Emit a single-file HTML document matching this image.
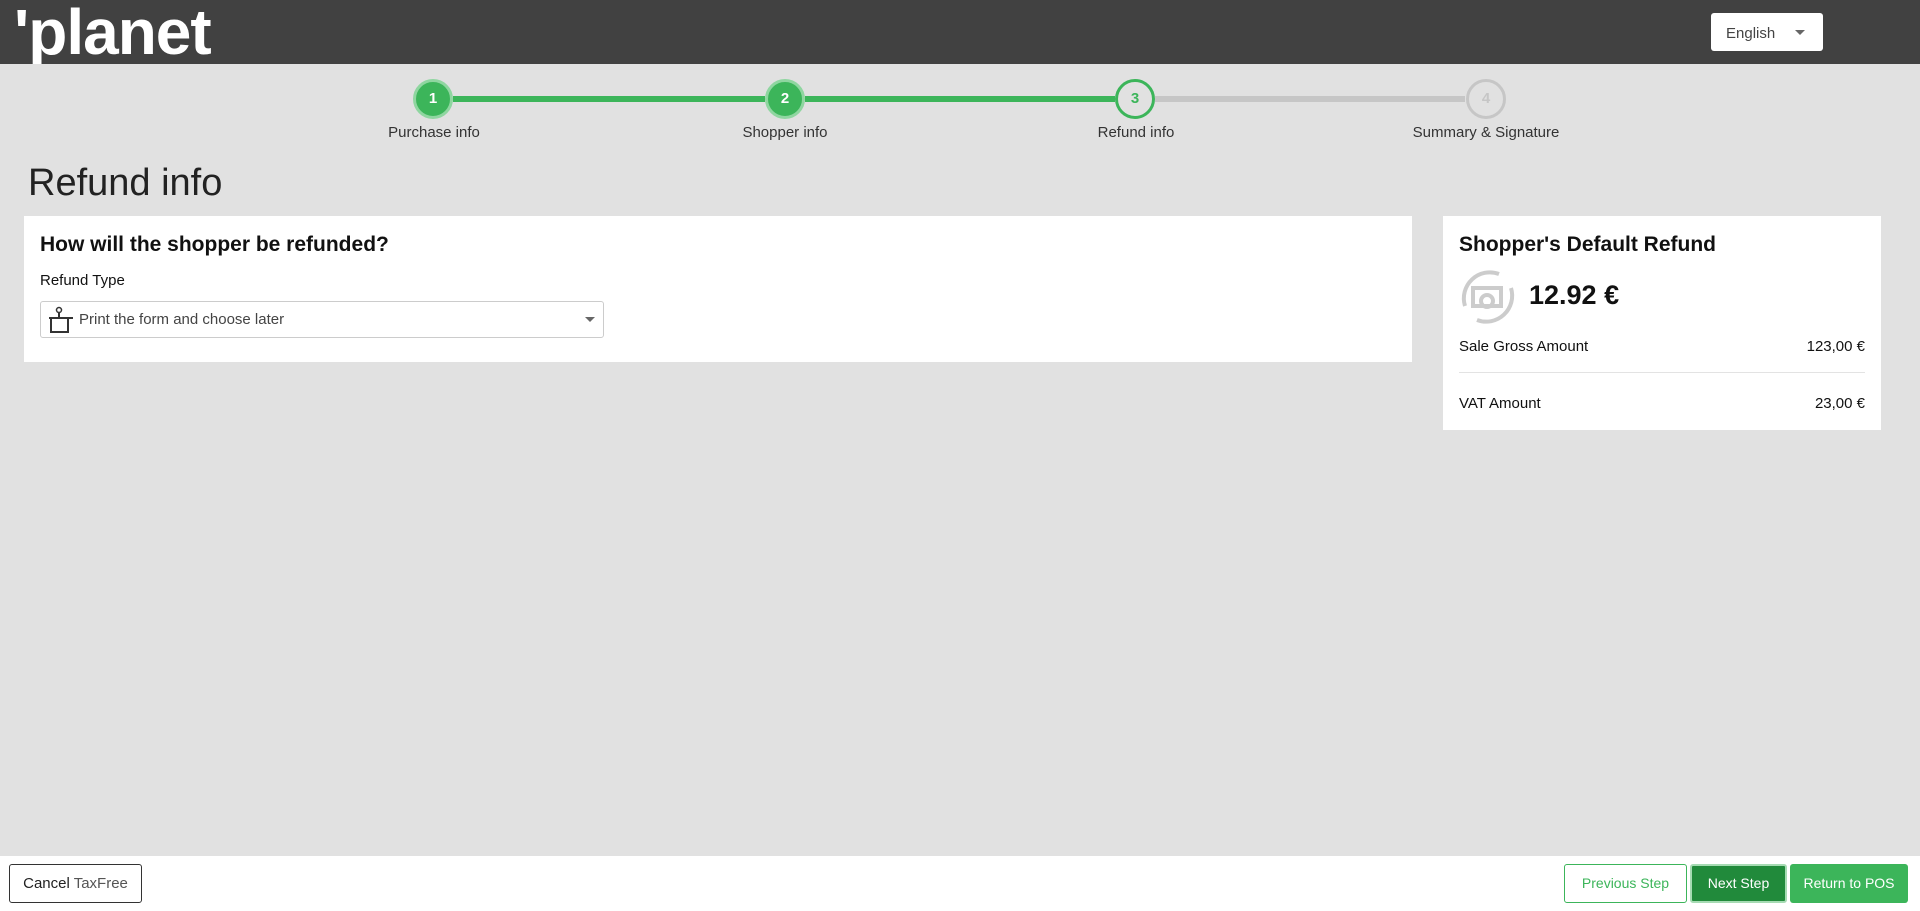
<!DOCTYPE html>
<html><head><meta charset="utf-8"><style>
*{box-sizing:border-box;margin:0;padding:0}
body{width:1920px;height:911px;background:#e1e1e1;font-family:"Liberation Sans Narrow","Liberation Sans",sans-serif;color:#111;position:relative;overflow:hidden}
.hdr{position:absolute;left:0;top:0;width:1920px;height:64px;background:#414141;overflow:hidden}
.logo{position:absolute;left:14px;top:-8px;color:#fff;font:bold 64px "Liberation Sans",sans-serif;letter-spacing:-1px;line-height:80px}
.lang{position:absolute;left:1711px;top:13px;width:112px;height:38px;background:#fff;border-radius:3px;font:15px "Liberation Sans",sans-serif;color:#444;padding:12px 0 0 15px}
.lang:after{content:"";position:absolute;left:84px;top:17px;border:5px solid transparent;border-top:5px solid #666}
.line{position:absolute;top:96px;height:6px}
.c{position:absolute;top:79px;width:40px;height:40px;border-radius:50%;text-align:center;font:bold 15px/34px "Liberation Sans",sans-serif}
.lbl{position:absolute;top:124px;font-size:15px;color:#333;transform:translateX(-50%);white-space:nowrap}
h1{position:absolute;left:28px;top:162px;font-weight:normal;font-size:38px;color:#222}
.card{position:absolute;background:#fff}
.sel{position:absolute;left:16px;top:85px;width:564px;height:37px;border:1px solid #ccc;border-radius:3px;font-size:15px;color:#444;padding:9px 0 0 38px}
.sel:after{content:"";position:absolute;right:8px;top:15px;border:5px solid transparent;border-top:5px solid #666}
.row{position:absolute;left:16px;right:16px;font-size:15px;display:flex;justify-content:space-between}
.btn{position:absolute;top:864px;height:39px;border-radius:3px;font-size:15px;text-align:center;line-height:37px;white-space:nowrap}
</style></head><body>
<div class="hdr"><div class="logo">'planet</div><div class="lang">English</div></div>

<div class="line" style="left:453px;width:312px;background:#3cb55a"></div>
<div class="line" style="left:805px;width:310px;background:#3cb55a"></div>
<div class="line" style="left:1155px;width:310px;background:#c6c6c6"></div>
<div class="c" style="left:413px;background:#3cb55a;border:3px solid #8fd6a0;color:#fff">1</div>
<div class="c" style="left:765px;background:#3cb55a;border:3px solid #8fd6a0;color:#fff">2</div>
<div class="c" style="left:1115px;border:3px solid #3cb55a;color:#3cb55a">3</div>
<div class="c" style="left:1466px;border:3px solid #c6c6c6;color:#c6c6c6">4</div>
<div class="lbl" style="left:434px">Purchase info</div>
<div class="lbl" style="left:785px">Shopper info</div>
<div class="lbl" style="left:1136px">Refund info</div>
<div class="lbl" style="left:1486px">Summary &amp; Signature</div>

<h1>Refund info</h1>

<div class="card" style="left:24px;top:216px;width:1388px;height:146px">
<div style="position:absolute;left:16px;top:17px;font-size:21px;font-weight:bold">How will the shopper be refunded?</div>
<div style="position:absolute;left:16px;top:56px;font-size:15px">Refund Type</div>
<div class="sel"><svg style="position:absolute;left:6px;top:3px" width="28" height="30" viewBox="0 0 28 30"><circle cx="12" cy="5" r="2.5" fill="none" stroke="#333" stroke-width="1.5"/><path d="M12 8v5M2 13h24M4 13v14h17V13" fill="none" stroke="#333" stroke-width="2"/></svg>Print the form and choose later</div>
</div>

<div class="card" style="left:1443px;top:216px;width:438px;height:214px">
<div style="position:absolute;left:16px;top:17px;font-size:21px;font-weight:bold">Shopper's Default Refund</div>
<svg style="position:absolute;left:16px;top:52px" width="58" height="58" viewBox="0 0 58 58"><path d="M40 6A26 26 0 0 0 6 38M18 52A26 26 0 0 0 52 20" fill="none" stroke="#ccc" stroke-width="4"/><rect x="14" y="20" width="28" height="18" fill="none" stroke="#ccc" stroke-width="4"/><circle cx="28" cy="33" r="6" fill="none" stroke="#ccc" stroke-width="4"/></svg>
<div style="position:absolute;left:86px;top:64px;font-size:27px;font-weight:bold">12.92 €</div>
<div class="row" style="top:122px"><span>Sale Gross Amount</span><span>123,00 €</span></div>
<div style="position:absolute;left:16px;right:16px;top:156px;border-top:1px solid #e3e3e3"></div>
<div class="row" style="top:179px"><span>VAT Amount</span><span>23,00 €</span></div>
</div>

<div style="position:absolute;left:0;top:856px;width:1920px;height:55px;background:#fff"></div>
<div class="btn" style="left:9px;width:133px;border:1px solid #333;color:#222">Cancel <span style="color:#555">TaxFree</span></div>
<div class="btn" style="left:1564px;width:123px;border:1px solid #3cb55a;color:#3cb55a;font-size:14px">Previous Step</div>
<div class="btn" style="left:1690px;width:97px;background:#218a3b;border:2px solid #a6dbb3;color:#fff;font-size:14px;line-height:35px">Next Step</div>
<div class="btn" style="left:1790px;width:118px;background:#3cb55a;color:#fff;font-size:14px;line-height:39px">Return to POS</div>
</body></html>
